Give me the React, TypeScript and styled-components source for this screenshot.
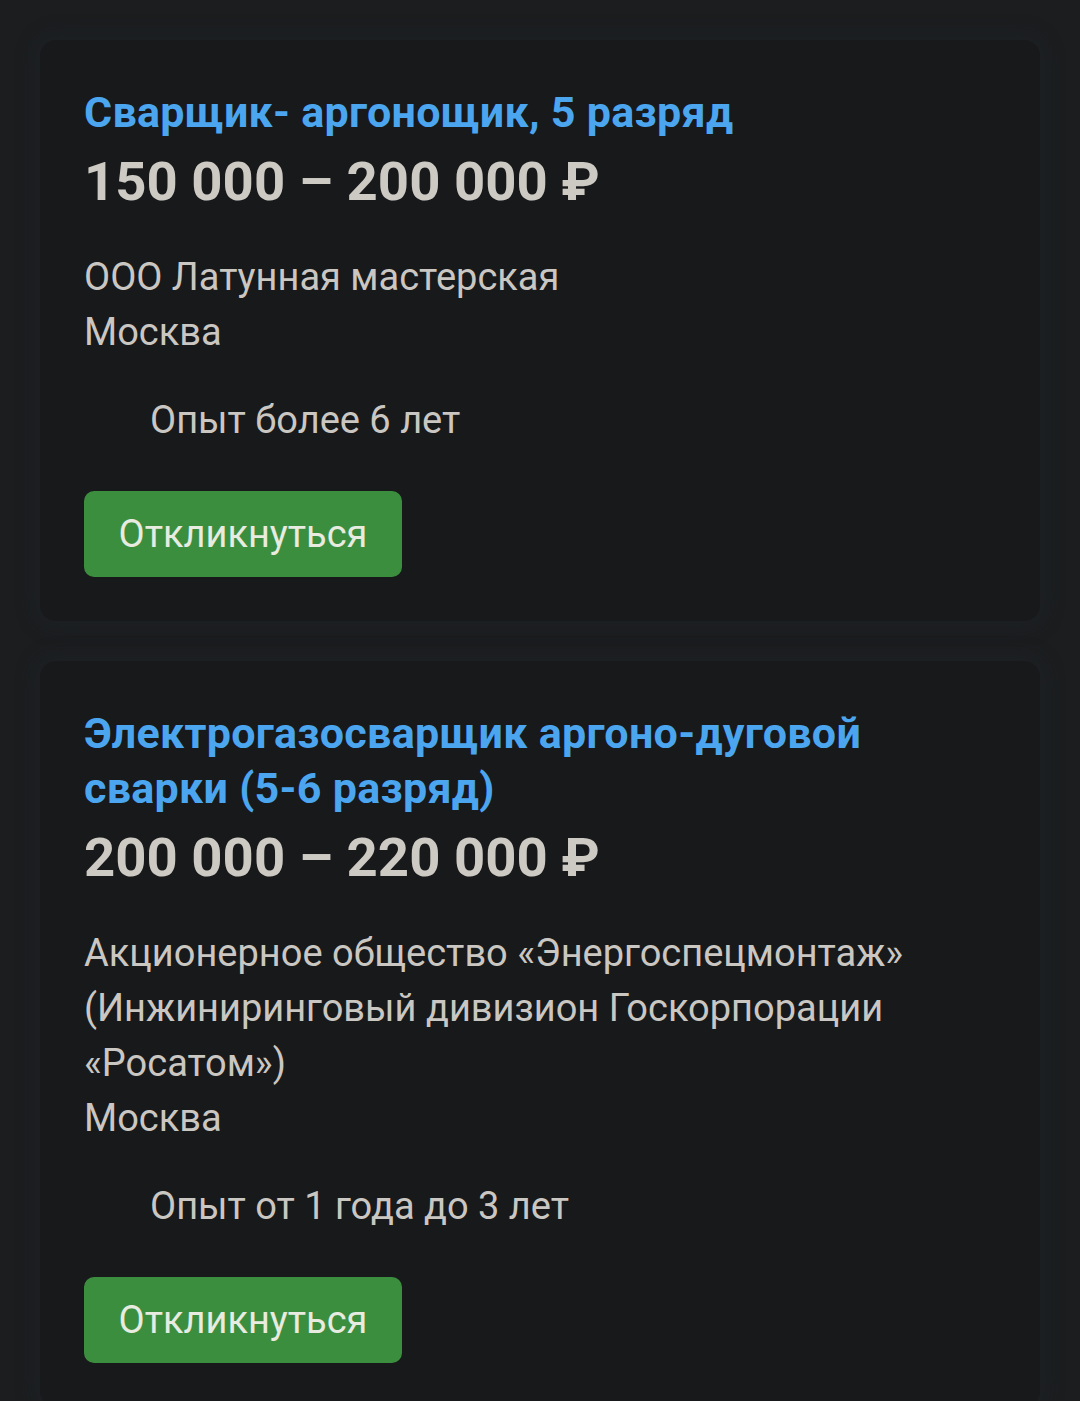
import styled, { createGlobalStyle } from "styled-components";

const GlobalStyle = createGlobalStyle`
  html, body {
    margin: 0;
    padding: 0;
    background: #1b1d1f;
  }
  body {
    font-family: Roboto, "Noto Sans", "Liberation Sans", sans-serif;
    -webkit-font-smoothing: antialiased;
  }
`;

const StyledPage = styled.div`
  display: flex;
  flex-direction: column;
  gap: 40px;
  padding: 40px;
  min-height: 1401px;
  box-sizing: border-box;
`;

const StyledCard = styled.div`
  display: flex;
  flex-direction: column;
  align-items: flex-start;
  padding: 45px 44px 44px;
  border-radius: 16px;
  background: #18191b;
  box-shadow: 0 0 20px 4px rgba(36, 40, 44, 0.4);
`;

const StyledTitle = styled.a`
  font-size: 43px;
  font-weight: 700;
  line-height: 55px;
  letter-spacing: 0.3px;
  color: #4ba6ef;
  text-decoration: none;
  max-width: 840px;
`;

const StyledSalary = styled.div`
  margin-top: 6px;
  font-size: 54.5px;
  font-weight: 700;
  line-height: 70px;
  color: #cdc9c3;
`;

const StyledText = styled.div`
  font-size: 38px;
  line-height: 55px;
  color: #cac7c2;
`;

const StyledCompany = styled(StyledText)`
  margin-top: 34px;
  max-width: 860px;
`;

const StyledCity = styled(StyledText)`
  line-height: 54px;
`;

const StyledExperience = styled(StyledText)`
  margin-top: 34px;
  padding-left: 66px;
  line-height: 54px;
`;

const StyledButton = styled.button`
  margin-top: 44px;
  width: 318px;
  height: 86px;
  border: none;
  border-radius: 10px;
  background: #3c8e3f;
  color: #e7ebe0;
  font-family: inherit;
  font-size: 38px;
  font-weight: 400;
  cursor: pointer;
`;

type Vacancy = {
  title: string;
  salary: string;
  company: string;
  city: string;
  experience: string;
};

const vacancies: Vacancy[] = [
  {
    title: "Сварщик- аргонощик, 5 разряд",
    salary: "150 000 – 200 000 ₽",
    company: "ООО Латунная мастерская",
    city: "Москва",
    experience: "Опыт более 6 лет",
  },
  {
    title: "Электрогазосварщик аргоно-дуговой сварки (5-6 разряд)",
    salary: "200 000 – 220 000 ₽",
    company:
      "Акционерное общество «Энергоспецмонтаж» (Инжиниринговый дивизион Госкорпорации «Росатом»)",
    city: "Москва",
    experience: "Опыт от 1 года до 3 лет",
  },
];

function VacancyCard({ vacancy }: { vacancy: Vacancy }) {
  return (
    <StyledCard>
      <StyledTitle href="#">{vacancy.title}</StyledTitle>
      <StyledSalary>{vacancy.salary}</StyledSalary>
      <StyledCompany>{vacancy.company}</StyledCompany>
      <StyledCity>{vacancy.city}</StyledCity>
      <StyledExperience>{vacancy.experience}</StyledExperience>
      <StyledButton>Откликнуться</StyledButton>
    </StyledCard>
  );
}

export default function App() {
  return (
    <>
      <GlobalStyle />
      <StyledPage>
        {vacancies.map((v) => (
          <VacancyCard key={v.title} vacancy={v} />
        ))}
      </StyledPage>
    </>
  );
}
